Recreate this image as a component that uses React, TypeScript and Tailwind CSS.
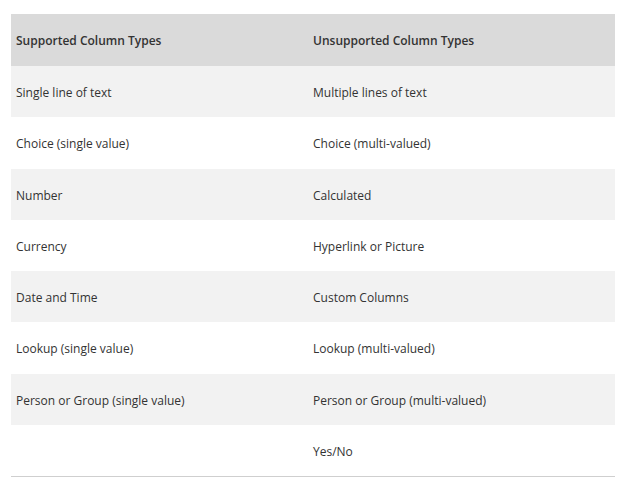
const ROWS: [string, string][] = [
  ["Single line of text", "Multiple lines of text"],
  ["Choice (single value)", "Choice (multi-valued)"],
  ["Number", "Calculated"],
  ["Currency", "Hyperlink or Picture"],
  ["Date and Time", "Custom Columns"],
  ["Lookup (single value)", "Lookup (multi-valued)"],
  ["Person or Group (single value)", "Person or Group (multi-valued)"],
  ["", "Yes/No"],
];

export default function App() {
  return (
    <div className="h-[492px] w-[624px] bg-white pt-[14px] pl-[11px] font-['Open_Sans',sans-serif] text-[12px] text-[#333]">
      <div className="w-[604px] border-b border-[#cfcfcf]">
        {/* header */}
        <div className="grid h-[52px] grid-cols-[297px_1fr] items-center bg-[#dadada] pt-[2px] font-semibold">
          <div className="pl-[5px]">Supported Column Types</div>
          <div className="pl-[5px]">Unsupported Column Types</div>
        </div>
        {ROWS.map(([a, b], i) => (
          <div
            key={b}
            className={`grid h-[51.25px] grid-cols-[297px_1fr] items-center pt-[3px] ${i % 2 === 0 ? "bg-[#f2f2f2]" : "bg-white"}`}
          >
            <div className="pl-[5px]">{a}</div>
            <div className="pl-[5px]">{b}</div>
          </div>
        ))}
      </div>
    </div>
  );
}
